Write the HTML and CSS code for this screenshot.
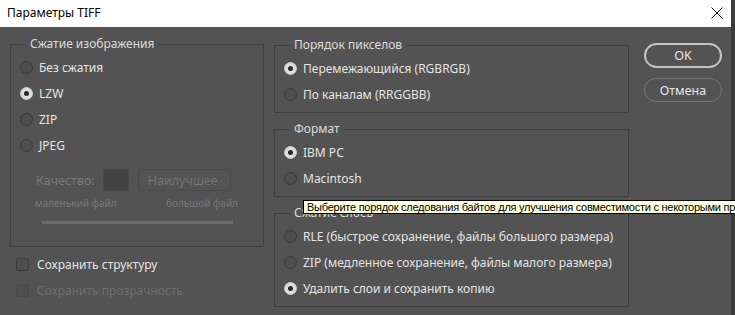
FILE: index.html
```html
<!DOCTYPE html>
<html lang="ru">
<head>
    <meta charset="UTF-8">
    <title>Параметры TIFF</title>
    <link rel="stylesheet" href="styles.css">
</head>
<body>
    <div class="window">
        <div class="titlebar">
            <span class="title">Параметры TIFF</span>
            <svg class="close" width="12" height="12" viewBox="0 0 12 12">
                <path d="M0.5 0.5 L11.5 11.5 M11.5 0.5 L0.5 11.5" stroke="#111" stroke-width="1" fill="none"/>
            </svg>
        </div>

        <div class="window-body">
            <div class="left-col">
                <fieldset class="group group-image">
                    <legend>Сжатие изображения</legend>
                    <div class="rows">
                        <div class="row"><span class="radio"></span>Без сжатия</div>
                        <div class="row"><span class="radio checked"></span>LZW</div>
                        <div class="row"><span class="radio"></span>ZIP</div>
                        <div class="row"><span class="radio"></span>JPEG</div>
                    </div>
                    <div class="quality">
                        <span class="quality-label">Качество:</span>
                        <span class="swatch"></span>
                        <span class="select">Наилучшее
                            <svg width="8" height="5" viewBox="0 0 8 5"><path d="M0.5 0.5 L4 4 L7.5 0.5" stroke="#666" fill="none"/></svg>
                        </span>
                    </div>
                    <div class="size-labels">
                        <span>маленький файл</span>
                        <span>большой файл</span>
                    </div>
                    <div class="slider"></div>
                </fieldset>
                <div class="checks">
                    <div class="row"><span class="checkbox"></span>Сохранить структуру</div>
                    <div class="row disabled"><span class="checkbox"></span>Сохранить прозрачность</div>
                </div>
            </div>

            <div class="middle-col">
                <fieldset class="group">
                    <legend>Порядок пикселов</legend>
                    <div class="rows">
                        <div class="row"><span class="radio checked"></span>Перемежающийся (RGBRGB)</div>
                        <div class="row"><span class="radio"></span>По каналам (RRGGBB)</div>
                    </div>
                </fieldset>
                <fieldset class="group">
                    <legend>Формат</legend>
                    <div class="rows">
                        <div class="row"><span class="radio checked"></span>IBM PC</div>
                        <div class="row"><span class="radio"></span>Macintosh</div>
                    </div>
                </fieldset>
                <fieldset class="group">
                    <legend>Сжатие слоев</legend>
                    <div class="rows">
                        <div class="row"><span class="radio"></span>RLE (быстрое сохранение, файлы большого размера)</div>
                        <div class="row"><span class="radio"></span>ZIP (медленное сохранение, файлы малого размера)</div>
                        <div class="row"><span class="radio checked"></span>Удалить слои и сохранить копию</div>
                    </div>
                </fieldset>
            </div>

            <div class="button-col">
                <button class="ok-btn">OK</button>
                <button class="cancel-btn">Отмена</button>
            </div>
        </div>

        <div class="tooltip">Выберите порядок следования байтов для улучшения совместимости с некоторыми програ</div>
    </div>
</body>
</html>
```

FILE: styles.css
```css
body {
    margin: 0;
    background-color: #3a3a3a;
    font-family: "Noto Sans", "Liberation Sans", sans-serif;
    font-size: 12px;
    overflow: hidden;
}

.window {
    position: relative;
    width: 731px;
    height: 315px;
    background-color: #535353;
}

.titlebar {
    height: 27px;
    background: #fff;
    display: flex;
    align-items: center;
    justify-content: space-between;
    padding: 0 8px 2px 7px;
    box-sizing: border-box;
}

.title {
    color: #000;
    font-size: 12px;
}

.window-body {
    display: flex;
    padding: 9px 0 0 10px;
}

.left-col {
    width: 254px;
}

.middle-col {
    width: 355px;
    margin-left: 10px;
    margin-top: 1px;
}

.button-col {
    width: 78px;
    margin-left: 15px;
    margin-top: 7px;
    display: flex;
    flex-direction: column;
    gap: 10px;
}

.group {
    margin: 0;
    padding: 0 0 5px 9px;
    border: 1px solid #3f3f3f;
    min-width: 0;
}

.middle-col .group + .group {
    margin-top: 8px;
}

.group legend {
    margin-left: 6px;
    padding: 0 4px;
    color: #dcdcdc;
    font-size: 12px;
    line-height: 16px;
}

.rows {
    padding-top: 2px;
}

.row {
    height: 26px;
    display: flex;
    align-items: center;
    color: #e4e4e4;
    font-size: 12px;
    white-space: nowrap;
}

.radio {
    width: 11px;
    height: 11px;
    border: 1px solid #393939;
    border-radius: 50%;
    background: #4e4e4e;
    margin-right: 6px;
    flex: none;
    position: relative;
}

.radio.checked {
    background: #dedede;
    border-color: #c8c8c8;
}

.radio.checked::after {
    content: "";
    position: absolute;
    left: 3px;
    top: 3px;
    width: 5px;
    height: 5px;
    border-radius: 50%;
    background: #2a2a2a;
}

.quality {
    display: flex;
    align-items: center;
    height: 22px;
    margin-top: 11px;
    padding-left: 16px;
    color: #7a7a7a;
    font-size: 12.5px;
}

.swatch {
    width: 24px;
    height: 20px;
    margin-left: 8px;
    border: 1px solid #474747;
    background: #434343;
}

.select {
    height: 20px;
    margin-left: 9px;
    border: 1px solid #4a4a4a;
    border-radius: 3px;
    display: flex;
    align-items: center;
    justify-content: space-between;
    padding: 0 6px 0 9px;
    width: 76px;
    color: #747474;
}

.size-labels {
    display: flex;
    justify-content: space-between;
    width: 203px;
    margin: 5px 0 0 15px;
    font-size: 10px;
    color: #777;
    line-height: 14px;
}

.slider {
    width: 191px;
    height: 3px;
    margin: 11px 0 17px 22px;
    background: #6b6b6b;
}

.checks {
    margin-top: 4px;
    padding-left: 6px;
}

.checkbox {
    width: 11px;
    height: 11px;
    border: 1px solid #3c3c3c;
    border-radius: 2px;
    background: #4e4e4e;
    margin-right: 8px;
}

.row.disabled {
    color: #6e6e6e;
}

.row.disabled .checkbox {
    border-color: #4a4a4a;
    background: #4f4f4f;
}

button {
    font-family: inherit;
    font-size: 12.5px;
    color: #e6e6e6;
    background: transparent;
    border-radius: 13px;
    padding: 0;
    cursor: pointer;
}

.ok-btn {
    height: 25px;
    border: 2px solid #c4c4c4;
}

.cancel-btn {
    height: 24px;
    border: 1px solid #777;
}

.tooltip {
    position: absolute;
    left: 303px;
    top: 200px;
    height: 12px;
    padding: 0 3px;
    background: #ffffe1;
    border: 1px solid #000;
    color: #000;
    font-size: 11px;
    line-height: 12px;
    white-space: nowrap;
    font-family: "Liberation Sans", sans-serif;
    letter-spacing: -0.25px;
}
```
